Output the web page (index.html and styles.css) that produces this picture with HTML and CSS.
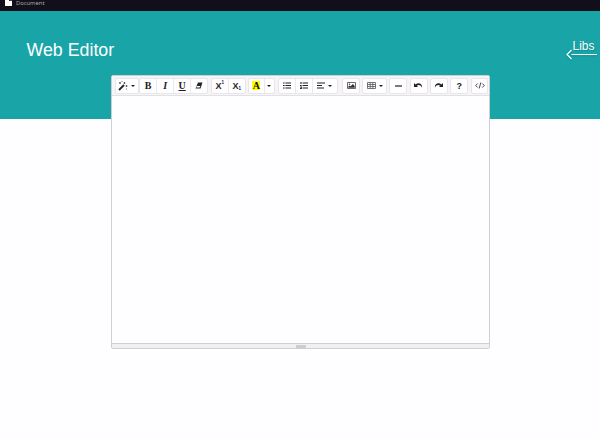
FILE: index.html
```
<!DOCTYPE html>
<html lang="en">
<head>
<meta charset="utf-8">
<title>Document</title>
<link rel="stylesheet" href="styles.css">
</head>
<body>
<div class="tabbar">
  <svg class="page-icon" width="7" height="8" viewBox="0 0 7 8"><path fill="#fff" d="M0 0h4v3h3v5H0z"/><path fill="#fff" d="M4.7 0L7 2.3H4.7z"/></svg>
  <span>Document</span>
</div>
<header class="hero">
  <h1>Web Editor</h1>
  <div class="libs">
    <span>Libs</span>
    <svg width="32" height="12" viewBox="0 0 32 12"><path d="M6.5 1L2 5.5L6.5 10M6.5 5.5H32" fill="none" stroke="#fff" stroke-width="1.2"/></svg>
  </div>
</header>
<main class="editor">
  <div class="toolbar">
    <div class="group style">
      <button><svg width="10" height="10" viewBox="0 0 10 10"><path d="M1 9L6 4" stroke="#222" stroke-width="1.8"/><path d="M6.5 1v2M5.5 2h2M2 1v2M1 2h2M8.5 4v2M7.5 5h2M4 0v1M8 8h1" stroke="#333" stroke-width=".7"/></svg><i class="caret"></i></button>
    </div>
    <div class="group font">
      <button class="serif">B</button>
      <button class="serif italic">I</button>
      <button class="serif underline">U</button>
      <button><svg width="8" height="7" viewBox="0 0 8 7"><path d="M3 .5h4.5L5.5 6.5H.5z" fill="#222"/><path d="M1.8 4h3.5L4.7 5.6H1.3z" fill="#fff"/></svg></button>
    </div>
    <div class="group pair">
      <button class="script">X<sup>1</sup></button>
      <button class="script">X<sub>1</sub></button>
    </div>
    <div class="group color">
      <button><span class="serif swatch">A</span></button>
      <button class="narrow"><i class="caret"></i></button>
    </div>
    <div class="group para">
      <button><svg width="8" height="7" viewBox="0 0 8 7"><path d="M0 1h1.6M0 3.5h1.6M0 6h1.6M2.4 1H8M2.4 3.5H8M2.4 6H8" stroke="#222" stroke-width="1.2"/></svg></button>
      <button><svg width="8" height="7" viewBox="0 0 8 7"><path d="M1 0v2M0 3.5h1.6M.3 5h1v1.5H0M2.6 1H8M2.6 3.5H8M2.6 6H8" fill="none" stroke="#222" stroke-width="1.1"/></svg></button>
      <button class="align"><svg width="8" height="7" viewBox="0 0 8 7"><path d="M0 1h8M0 3.5h5M0 6h7" stroke="#222" stroke-width="1.1"/></svg><i class="caret"></i></button>
    </div>
    <div class="group image">
      <button><svg width="9" height="7" viewBox="0 0 9 7"><path d="M.5.5h8v6h-8z" fill="none" stroke="#444" stroke-width=".8"/><circle cx="2.5" cy="2.2" r=".7" fill="#333"/><path d="M1.3 5.7V4.5L2.8 3.6l.8.7L5.9 2l1.8 2v1.7z" fill="#333"/></svg></button>
    </div>
    <div class="group style">
      <button><svg width="9" height="7" viewBox="0 0 9 7"><path d="M.5.5h8v6h-8zM.5 2.5h8M.5 4.5h8M3.2.5v6M5.8.5v6" fill="none" stroke="#555" stroke-width=".8"/></svg><i class="caret"></i></button>
    </div>
    <div class="group">
      <button><svg width="7" height="2" viewBox="0 0 7 2"><path d="M0 1h7" stroke="#222" stroke-width="1.2"/></svg></button>
    </div>
    <div class="group">
      <button><svg width="9" height="7" viewBox="0 0 9 7"><path d="M0 1v4h4L2.8 3.7C4.5 2.5 6.7 3 8 5.5C8.8 2 4.5-.1 1.6 2.4z" fill="#222"/></svg></button>
    </div>
    <div class="group">
      <button><svg width="9" height="7" viewBox="0 0 9 7"><path d="M9 1v4H5l1.2-1.3C4.5 2.5 2.3 3 1 5.5C.2 2 4.5-.1 7.4 2.4z" fill="#222"/></svg></button>
    </div>
    <div class="group">
      <button class="help">?</button>
    </div>
    <div class="group">
      <button><svg width="10" height="7" viewBox="0 0 10 7"><path d="M2.7 1.5L.7 3.5l2 2M7.3 1.5l2 2-2 2M5.8.5L4.2 6.5" fill="none" stroke="#333" stroke-width=".9"/></svg></button>
    </div>
  </div>
  <div class="canvas"></div>
  <div class="statusbar"><span class="grip"></span></div>
</main>
</body>
</html>
```
FILE: styles.css
```
* { box-sizing: border-box; }
body {
  margin: 0;
  height: 440px;
  overflow: hidden;
  background: #fefdff;
  font-family: "Liberation Sans", Arial, sans-serif;
}
.tabbar {
  height: 11px;
  background: #110f19;
  display: flex;
  padding-left: 5px;
  gap: 4px;
  color: #aaa8ae;
  font: 5.8px/6px "Noto Sans", sans-serif;
}
.page-icon { margin-top: -2px; }
.hero {
  height: 108px;
  padding: 28px 3px 0 26.5px;
  background: #19a5a8;
  color: #fff;
  display: flex;
  justify-content: space-between;
  align-items: flex-start;
}
h1 {
  margin: 0;
  font-size: 17.8px;
  line-height: 23px;
  font-weight: 400;
}
.libs {
  width: 32px;
  display: flex;
  flex-direction: column;
  font-size: 12px;
  line-height: 15px;
  text-shadow: 1px 1px 1px #0a6f7388;
}
.libs span { padding-left: 7.5px; margin-right: -2px; }
.libs svg { margin-top: -5px; filter: drop-shadow(0 1px 1px #0a6f7399); }
.editor {
  position: relative;
  width: 379px;
  height: 274px;
  margin: -44px 0 0 111px;
  border: 1px solid #d0ced2;
  border-radius: 2px;
  background: #fefdff;
  display: flex;
  flex-direction: column;
}
.toolbar {
  height: 20px;
  padding: 1.5px 0 0 2.7px;
  background: #f6f4f7;
  border-bottom: 1px solid #e2e0e4;
  display: flex;
  gap: 2.5px;
}
.group {
  width: 17.8px;
  height: 16px;
  flex: none;
  display: flex;
  border: 1px solid #e8e6ea;
  border-radius: 2px;
  background: #fefdff;
}
.style { width: 24.5px; }
.font { width: 69px; margin-left: -2.5px; }
.pair { width: 35px; }
.color { width: 27px; }
.para { width: 60px; }
.image { margin-left: 2px; }
button {
  flex: 1;
  height: 14px;
  padding: 0;
  border: 0;
  border-right: 1px solid #eae8ec;
  background: none;
  color: #222;
  display: flex;
  align-items: center;
  justify-content: center;
  gap: 3px;
  font-family: "Liberation Sans", Arial, sans-serif;
}
button:last-child { border-right: 0; }
.narrow { flex: 0 0 9.5px; }
.align { flex: 0 0 24px; }
.serif { font: bold 10px/10px "Liberation Serif", serif; }
.italic { font-style: italic; }
.underline { text-decoration: underline; }
.script { font-size: 9px; font-weight: bold; gap: 0; }
sup, sub { font-size: 4.5px; line-height: 4px; }
sup { margin-top: -5px; }
sub { margin-top: 6px; }
.swatch {
  width: 8px;
  height: 9px;
  line-height: 9px;
  text-align: center;
  background: #ff0;
  color: #111;
}
.caret {
  border: 2px solid transparent;
  border-top-color: #222;
  border-top-width: 2.5px;
  border-bottom: 0;
}
.help { font-size: 9px; font-weight: bold; }
.canvas { flex: 1; }
.statusbar {
  height: 5px;
  background: #f1eff2;
  border-top: 1px solid #cfcdd1;
  display: flex;
  justify-content: center;
  align-items: center;
}
.grip {
  width: 10px;
  height: 3px;
  background: #ceccd0;
}
```
